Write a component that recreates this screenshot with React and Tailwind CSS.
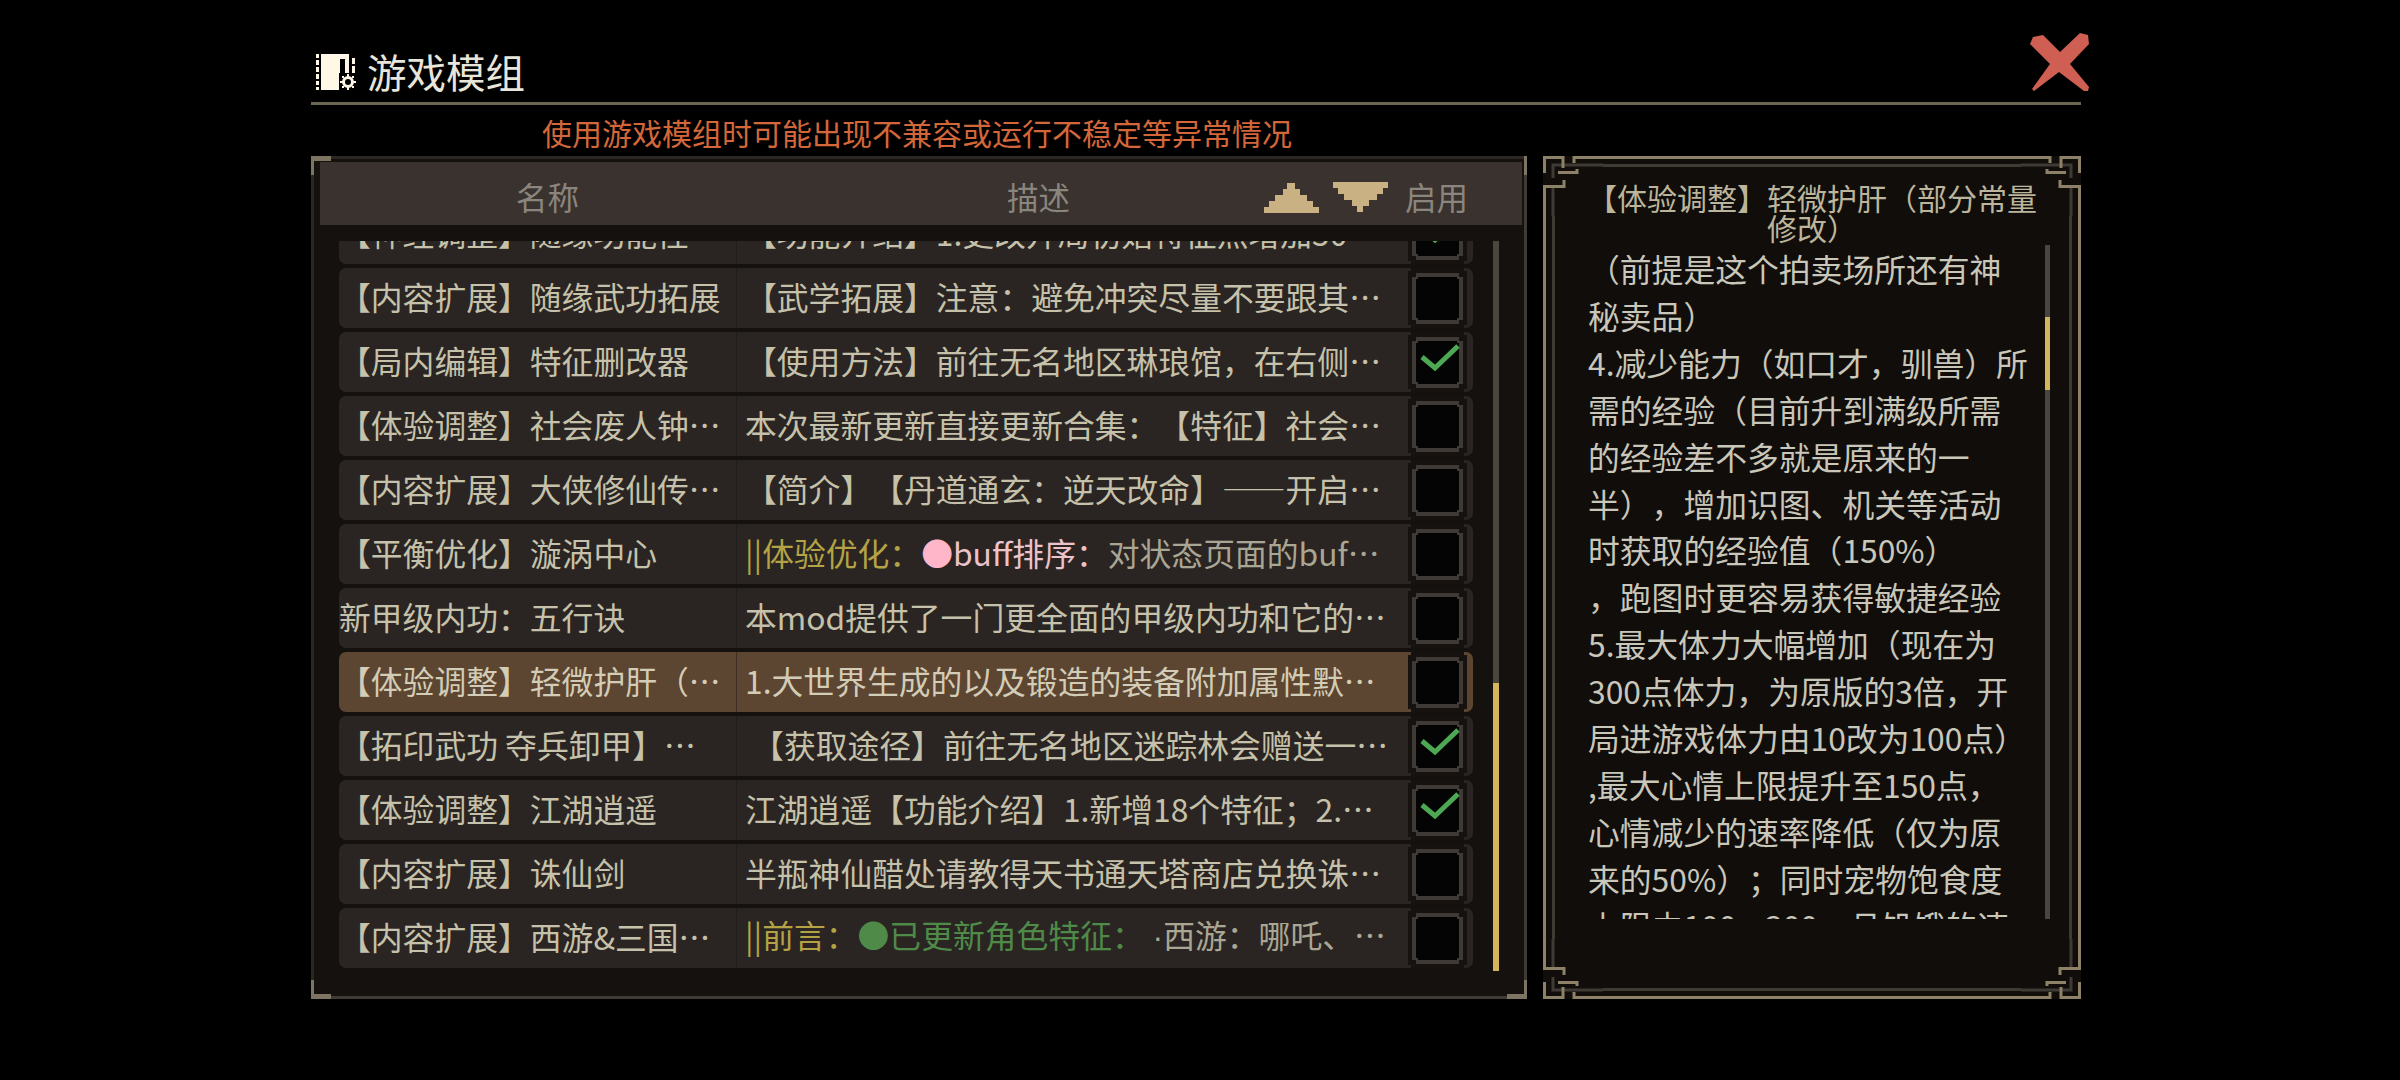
const rows = [
  { name: '【神经调整】随缘功能性', desc: '【功能介绍】1.更改开局初始特征点增加50', on: true },
  { name: '【内容扩展】随缘武功拓展', desc: '【武学拓展】注意：避免冲突尽量不要跟其…' },
  { name: '【局内编辑】特征删改器', desc: '【使用方法】前往无名地区琳琅馆，在右侧…', on: true },
  { name: '【体验调整】社会废人钟…', desc: '本次最新更新直接更新合集：【特征】社会…' },
  { name: '【内容扩展】大侠修仙传…', desc: '【简介】【丹道通玄：逆天改命】——开启…' },
  {
    name: '【平衡优化】漩涡中心',
    desc: (
      <>
        <span className="text-[#b3a344]">||体验优化：</span>
        <span className="text-[#ffb6c9]">●</span>
        <span className="text-[#ecc3cb]">buff排序：</span>
        <span className="text-[#aaa694]">对状态页面的buf…</span>
      </>
    ),
  },
  { name: '新甲级内功：五行诀', desc: '本mod提供了一门更全面的甲级内功和它的…' },
  { name: '【体验调整】轻微护肝（…', desc: '1.大世界生成的以及锻造的装备附加属性默…', selected: true },
  { name: '【拓印武功 夺兵卸甲】…', desc: ' 【获取途径】前往无名地区迷踪林会赠送一…', on: true },
  { name: '【体验调整】江湖逍遥', desc: '江湖逍遥【功能介绍】1.新增18个特征；2.…', on: true },
  { name: '【内容扩展】诛仙剑', desc: '半瓶神仙醋处请教得天书通天塔商店兑换诛…' },
  {
    name: '【内容扩展】西游&三国…',
    desc: (
      <>
        <span className="text-[#b3a344]">||前言：</span>
        <span className="text-[#4f8a49]">●已更新角色特征：</span>
        <span className="text-[#aaa694]"><span className="font-['Liberation_Sans']"> ·</span>西游：哪吒、…</span>
      </>
    ),
  },
]

const lines = [
  '（前提是这个拍卖场所还有神',
  '秘卖品）',
  '4.减少能力（如口才，驯兽）所',
  '需的经验（目前升到满级所需',
  '的经验差不多就是原来的一',
  '半），增加识图、机关等活动',
  '时获取的经验值（150%）',
  '，跑图时更容易获得敏捷经验',
  '5.最大体力大幅增加（现在为',
  '300点体力，为原版的3倍，开',
  '局进游戏体力由10改为100点）',
  ',最大心情上限提升至150点，',
  '心情减少的速率降低（仅为原',
  '来的50%）；同时宠物饱食度',
  '上限由100->300，且饥饿的速',
]

const Checkbox = ({ on }) => (
  <svg width="60" height="60" viewBox="0 0 60 60" className="shrink-0" shapeRendering="crispEdges">
    <path d="M3 0H56V3H59V57H56V60H3V57H0V3H3Z" fill="#151210" />
    <rect x="8" y="9" width="43" height="43" fill="#040404" />
    <path d="M8 5H51V9H8ZM8 52H51V56H8ZM4 9H8V52H4ZM51 9H55V52H51ZM8 9H10V11H8ZM49 9H51V11H49ZM8 50H10V52H8ZM49 50H51V52H49Z" fill="#403a36" />
    {on && (
      <path d="M14 25L27 36L50 14" fill="none" stroke="#4ea853" strokeWidth="5" shapeRendering="auto" />
    )}
  </svg>
)

const Row = ({ row }) => (
  <div className={`flex h-[60px] w-[1134px] shrink-0 items-center rounded-[7px] text-[31.8px] ${row.selected ? 'bg-[#5c4531] text-[#d3ccb6]' : 'bg-[#2a2522] text-[#c6c1aa]'}`}>
    <div className="w-[397px] shrink-0 overflow-hidden pb-[3px] whitespace-nowrap">{row.name}</div>
    <div className={`flex h-full w-[672px] shrink-0 items-center overflow-hidden border-l pb-[3px] pl-[8px] whitespace-pre ${row.selected ? 'border-[#3f2f22]' : 'border-[#211d1a]'}`}>
      <span>{row.desc}</span>
    </div>
    <Checkbox on={row.on} />
  </div>
)

const Corner = ({ className }) => (
  <svg width="60" height="60" viewBox="0 0 60 60" className={`absolute ${className}`}>
    <g fill="none" strokeWidth="3">
      <path d="M10 22V9H60M10 32V60" stroke="#3f3b34" />
      <path d="M1.5 17V1.5H20V12M15 16.5H34V13M1.5 60V30.5H21V24M31 7V1.5H60" stroke="#8d8267" />
    </g>
  </svg>
)

const App = () => (
  <div lang="zh-CN" className="h-[1080px] w-[2400px] overflow-hidden bg-black pt-[32px] pl-[311px] font-['Noto_Sans_CJK_SC',sans-serif] [text-spacing-trim:space-all]">
    <div className="w-[1770px]">
      <div className="flex h-[70px] items-start justify-between">
        <div className="mt-[18px] ml-[5px] flex items-start gap-[11px]">
          <svg width="40" height="36" viewBox="0 0 40 36" fill="#fff8e6" className="mt-[4px]">
            <path d="M0 0H3V4H0ZM0 6H3V11H0ZM0 13H3V18H0ZM0 20H3V25H0ZM0 27H3V31H0ZM0 33H3V36H0Z" />
            <path d="M5 0H33V19H29V5H24V19H23V36H5Z" />
            <path d="M36 4H39V10H36ZM36 12H39V19H36Z" />
            <circle cx="32" cy="28" r="4.5" fill="none" stroke="#fff8e6" strokeWidth="3" />
            <path d="M31 20H33V23H31ZM31 33H33V36H31ZM24 27H27V29H24ZM37 27H40V29H37ZM26 22H28V24H26ZM36 22H38V24H36ZM26 32H28V34H26ZM36 32H38V34H36Z" />
          </svg>
          <span className="mt-[1px] text-[39.5px] leading-none text-[#e8e5da]">游戏模组</span>
        </div>
        <svg width="60" height="60" viewBox="0 0 60 60" fill="#cf5f52" className="-mr-[9px]">
          <path d="M0 12L3 5L13 3L30 20L50 1L58 3L59 12L40 32L59 55L58 59L54 59L29 40L4 59L2 57L20 32Z" />
        </svg>
      </div>
      <div className="h-[3px] bg-[#6b6554]" />
      <div className="flex h-[51px] items-center pt-[3px] pl-[231px] text-[30px] leading-none text-[#d4673a]">
        使用游戏模组时可能出现不兼容或运行不稳定等异常情况
      </div>

      <div className="flex gap-[16px]">
        {/* mod list */}
        <div className="relative h-[843px] w-[1216px] border-[3px] border-t-[#2b2824] border-r-[#3f3a33] border-b-[#3f3a33] border-l-[#2b2824] bg-[#14110e] pt-[3px]">
          <div className="ml-[6px] flex h-[63px] w-[1202px] items-center bg-[#3a322e] pt-[6px] pl-[196px] text-[31.5px] leading-none text-[#8a867e]">
            <span>名称</span>
            <span className="ml-[428px]">描述</span>
            <svg width="55" height="30" viewBox="0 0 55 30" fill="#c9b183" className="mt-[3px] ml-[194px]" shapeRendering="crispEdges">
              <path d="M23 0H31V6H36V12H43V18H49V24H55V30H0V24H5V18H11V12H19V6H23Z" />
            </svg>
            <svg width="55" height="30" viewBox="0 0 55 30" fill="#c9b183" className="mt-[1px] ml-[14px]" shapeRendering="crispEdges">
              <path d="M0 0H55V6H50V12H44V18H36V24H30V30H24V24H19V18H11V12H5V6H0Z" />
            </svg>
            <span className="ml-[17px]">启用</span>
          </div>
          <div className="mt-[16px] ml-[25px] flex h-[730px]">
            <div className="h-full overflow-hidden">
              <div className="-mt-[37px] flex flex-col gap-[4px]">
                {rows.map((row, i) => (
                  <Row key={i} row={row} />
                ))}
              </div>
            </div>
            <div className="ml-[20px] h-full w-[6px] bg-[#4a463d]">
              <div className="mt-[442px] h-[288px] bg-[#d4b55c]" />
            </div>
          </div>
          <div className="absolute -top-[3px] -left-[3px] h-[5px] w-[20px] bg-[#7d7462]" />
          <div className="absolute -top-[3px] -left-[3px] h-[19px] w-[3px] bg-[#7d7462]" />
          <div className="absolute -right-[3px] -bottom-[3px] h-[5px] w-[20px] bg-[#7d7462]" />
          <div className="absolute -right-[3px] -bottom-[3px] h-[19px] w-[3px] bg-[#7d7462]" />
          <div className="absolute -top-[3px] -right-[3px] h-[19px] w-[3px] bg-[#7d7462]" />
          <div className="absolute -bottom-[3px] -left-[3px] h-[5px] w-[20px] bg-[#7d7462]" />
          <div className="absolute -bottom-[3px] -left-[3px] h-[19px] w-[3px] bg-[#7d7462]" />
        </div>

        {/* description */}
        <div className="relative h-[843px] w-[538px] bg-[#100d0a] pt-[26px]">
          <div className="text-center text-[30px] leading-[30px] text-[#bdb59b]">
            <div className="whitespace-nowrap">【体验调整】轻微护肝（部分常量</div>
            <div>修改）</div>
          </div>
          <div className="mt-[3px] ml-[45px] flex h-[674px]">
            <div className="h-full w-[457px] overflow-hidden text-[31.8px] leading-[46.9px] whitespace-nowrap text-[#c9c6ba]">
              {lines.map((line) => (
                <div key={line}>{line}</div>
              ))}
            </div>
            <div className="h-full w-[5px] bg-[#4a463d]">
              <div className="mt-[72px] h-[73px] bg-[#d4b55c]" />
            </div>
          </div>

          <Corner className="top-0 left-0" />
          <Corner className="top-0 right-0 -scale-x-100" />
          <Corner className="bottom-0 left-0 -scale-y-100" />
          <Corner className="right-0 bottom-0 -scale-100" />
          <div className="absolute top-0 right-[60px] left-[60px] h-[3px] bg-[#8d8267]" />
          <div className="absolute top-[8px] right-[60px] left-[60px] h-[3px] bg-[#3f3b34]" />
          <div className="absolute right-[60px] bottom-0 left-[60px] h-[3px] bg-[#8d8267]" />
          <div className="absolute right-[60px] bottom-[8px] left-[60px] h-[3px] bg-[#3f3b34]" />
          <div className="absolute top-[60px] bottom-[60px] left-0 w-[3px] bg-[#8d8267]" />
          <div className="absolute top-[60px] bottom-[60px] left-[9px] w-[3px] bg-[#3f3b34]" />
          <div className="absolute top-[60px] right-0 bottom-[60px] w-[3px] bg-[#8d8267]" />
          <div className="absolute top-[60px] right-[9px] bottom-[60px] w-[3px] bg-[#3f3b34]" />
        </div>
      </div>
    </div>
  </div>
)

export default App
